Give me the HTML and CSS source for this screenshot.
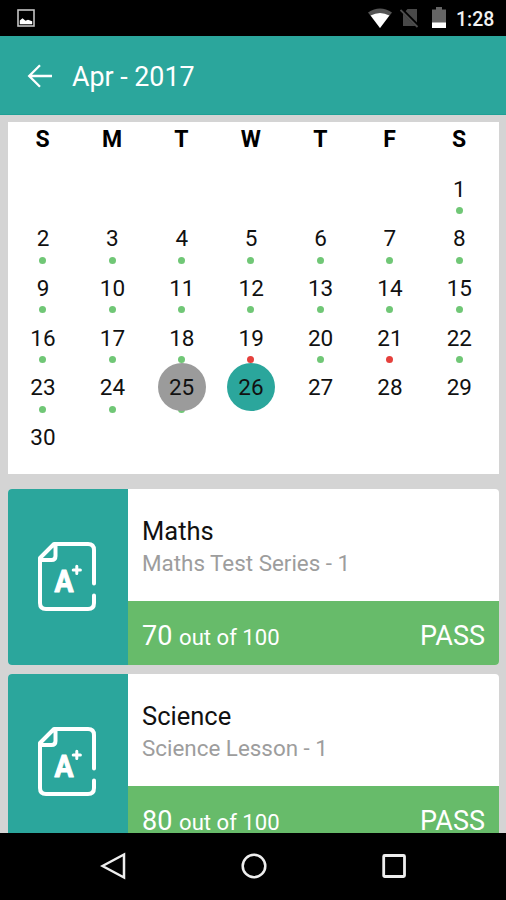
FILE: index.html
```html
<!DOCTYPE html>
<html lang="en">
<head>
<meta charset="utf-8">
<title>Apr - 2017</title>
<link rel="stylesheet" href="styles.css">
</head>
<body>
<header class="status">
  <svg class="status-photo" width="18" height="18" viewBox="0 0 18 18"><rect x="1" y="1" width="16" height="16" fill="none" stroke="#c4c4c4" stroke-width="1.600"/><path d="M2.800 15.200v-3.700l2.700-2.200 3 2.400 2.500-1 4.200 1.500v3z" fill="#fff"/></svg>
  <svg class="status-wifi" width="24" height="21" viewBox="0 0 24 21"><path d="M0 4.500Q12-3.500 24 4.500L12 20z" fill="#555"/><path d="M2.600 7.500Q12 2.500 21.400 7.500L12 20z" fill="#fff"/></svg>
  <svg class="status-sim" width="20" height="20" viewBox="0 0 20 20"><path d="M7.500 1H17v17H3V6z" fill="#494949"/><path d="M1.500 1.500l17 17" stroke="#000" stroke-width="3.500"/><path d="M.5 2l17 17" stroke="#4e4e4e" stroke-width="1.800"/></svg>
  <svg class="status-battery" width="14" height="22" viewBox="0 0 14 22"><path d="M0 2.500h4V0h6v2.500h4V16H0z" fill="#656565"/><path d="M0 15.500h14V21H0z" fill="#fff"/></svg>
  <span class="clock">1:28</span>
</header>
<div class="appbar">
  <svg width="26" height="24" viewBox="0 0 26 24" fill="none" stroke="#fff" stroke-width="2.300"><path d="M25 12H2.500M13 1.200L2.200 12 13 22.800"/></svg>
  <h1>Apr - 2017</h1>
</div>
<main class="content">
  <section class="calendar">
    <b>S</b><b>M</b><b>T</b><b>W</b><b>T</b><b>F</b><b>S</b>
    <span class="day first ok">1</span>
    <span class="day ok">2</span><span class="day ok">3</span><span class="day ok">4</span><span class="day ok">5</span><span class="day ok">6</span><span class="day ok">7</span><span class="day ok">8</span>
    <span class="day ok">9</span><span class="day ok">10</span><span class="day ok">11</span><span class="day ok">12</span><span class="day ok">13</span><span class="day ok">14</span><span class="day ok">15</span>
    <span class="day ok">16</span><span class="day ok">17</span><span class="day ok">18</span><span class="day bad">19</span><span class="day ok">20</span><span class="day bad">21</span><span class="day ok">22</span>
    <span class="day ok">23</span><span class="day ok">24</span><span class="day ok"><i class="disc today">25</i></span><span class="day"><i class="disc selected">26</i></span><span class="day">27</span><span class="day">28</span><span class="day">29</span>
    <span class="day">30</span>
  </section>
  <article class="card">
    <div class="badge">
      <svg width="60" height="70" viewBox="0 0 60 70" fill="none" stroke="#fff" stroke-width="4" stroke-linecap="round" stroke-linejoin="round"><path d="M57 42.500V9q0-6-6-6H17L3 17v45q0 6 6 6h42q6 0 6-6v-7.500M18.500 3v12q0 4-4 4H3"/><path d="M39.800 25.300v7.200M36.200 28.900h7.200" stroke-width="3"/><text x="17.500" y="51" textLength="19" lengthAdjust="spacingAndGlyphs" class="grade">A</text></svg>
    </div>
    <div class="details">
      <div class="subject"><h2>Maths</h2><p>Maths Test Series - 1</p></div>
      <div class="result"><span class="score">70 <small>out of 100</small></span><span class="pass">PASS</span></div>
    </div>
  </article>
  <article class="card">
    <div class="badge">
      <svg width="60" height="70" viewBox="0 0 60 70" fill="none" stroke="#fff" stroke-width="4" stroke-linecap="round" stroke-linejoin="round"><path d="M57 42.500V9q0-6-6-6H17L3 17v45q0 6 6 6h42q6 0 6-6v-7.500M18.500 3v12q0 4-4 4H3"/><path d="M39.800 25.300v7.200M36.200 28.900h7.200" stroke-width="3"/><text x="17.500" y="51" textLength="19" lengthAdjust="spacingAndGlyphs" class="grade">A</text></svg>
    </div>
    <div class="details">
      <div class="subject"><h2>Science</h2><p>Science Lesson - 1</p></div>
      <div class="result"><span class="score">80 <small>out of 100</small></span><span class="pass">PASS</span></div>
    </div>
  </article>
</main>
<nav class="navbar">
  <svg width="26" height="28" viewBox="0 0 26 28" fill="none" stroke="#eee" stroke-width="2.500"><path d="M24 2.500v23L2.500 14z"/></svg>
  <svg width="26" height="28" viewBox="0 0 26 28" fill="none" stroke="#eee" stroke-width="2.500"><circle cx="13" cy="14" r="11.300"/></svg>
  <svg width="26" height="28" viewBox="0 0 26 28" fill="none" stroke="#eee" stroke-width="2.800"><rect x="2.700" y="3.500" width="20.800" height="21" rx="1"/></svg>
</nav>
</body>
</html>
```
FILE: styles.css
```css
* { box-sizing: border-box; }
body {
  margin: 0;
  width: 506px;
  height: 900px;
  display: flex;
  flex-direction: column;
  overflow: hidden;
  font-family: Roboto, sans-serif;
  background: #d4d4d4;
}
svg { display: block; flex: none; }
h1, h2, p { margin: 0; font-weight: 400; }
.status {
  flex: none;
  height: 36px;
  display: flex;
  align-items: center;
  padding: 0 11px 0 17px;
  background: #000;
  color: #f2f2f2;
}
.status-wifi { margin-left: auto; }
.status-sim { margin-left: 8px; }
.status-battery { margin-left: 12px; }
.clock { margin-left: 10px; width: 39px; font-size: 19.5px; font-weight: 500; white-space: nowrap; padding-top: 2px; }
.appbar {
  flex: none;
  height: 79px;
  display: flex;
  align-items: center;
  gap: 19px;
  padding: 1px 27px 0;
  background: #2ba69c;
  border-bottom: 1px solid #1fa095;
  color: #fff;
}
.appbar h1 { font-size: 26.800px; line-height: 32px; padding-top: 2px; }
.content { flex: 1; min-height: 0; overflow: hidden; padding: 7px 7px 0 8px; }
.calendar {
  height: 352px;
  background: #fff;
  display: grid;
  grid-template-columns: repeat(7, 69.4px);
  grid-template-rows: 41.7px;
  grid-auto-rows: 49.7px;
  text-align: center;
  font-size: 22.5px;
  color: #111;
  margin-bottom: 15px;
}
.calendar b { line-height: 35px; font-weight: 700; color: #000; font-size: 23px; }
.day { position: relative; line-height: 50px; left: .3px; }
.first { grid-column: 7; }
.ok::after, .bad::after {
  content: "";
  position: absolute;
  left: 31px;
  top: 43.200px;
  width: 7px;
  height: 7px;
  border-radius: 50%;
  background: #70c776;
}
.bad::after { background: #e5403c; }
.disc {
  position: absolute;
  z-index: 1;
  left: 10.500px;
  top: .5px;
  width: 48px;
  height: 48px;
  border-radius: 50%;
  line-height: 49px;
  font-style: normal;
}
.today { background: #9b9b9b; }
.selected { background: #2ba69c; }
.card {
  display: flex;
  height: 176px;
  margin-bottom: 9px;
  border-radius: 4px;
  overflow: hidden;
  background: #fff;
}
.badge { flex: none; width: 120px; background: #2ba69c; padding: 52px 0 0 29px; }
.grade { font: 700 31px Roboto, sans-serif; fill: #fff; stroke-width: 1px; }
.details { flex: 1; display: flex; flex-direction: column; }
.subject { flex: 1; padding: 26px 14px 0; }
.subject h2 { font-size: 25.500px; line-height: 32px; color: #111; }
.subject p { font-size: 22.400px; line-height: 33px; color: #9d9d9d; }
.result {
  height: 64px;
  display: flex;
  justify-content: space-between;
  align-items: baseline;
  padding: 23px 14px 0;
  background: #67bb6a;
  color: #fff;
  line-height: 24px;
  font-size: 27px;
}
.result small { font-size: 22.100px; line-height: 1; }
.navbar {
  flex: none;
  height: 67px;
  display: flex;
  justify-content: space-between;
  padding: 19px 99px 0 100px;
  background: #000;
}
```
